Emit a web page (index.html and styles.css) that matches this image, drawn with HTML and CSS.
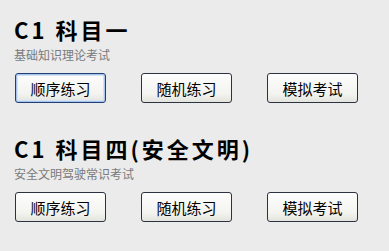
FILE: index.html
```html
<!DOCTYPE html>
<html lang="zh-CN">
<head>
<meta charset="utf-8">
<link rel="stylesheet" href="styles.css">
</head>
<body>
<div class="page">
  <section class="subject">
    <h1 class="title">C1 科目一</h1>
    <p class="desc">基础知识理论考试</p>
    <div class="buttons">
      <button class="btn btn-default">顺序练习</button>
      <button class="btn">随机练习</button>
      <button class="btn">模拟考试</button>
    </div>
  </section>
  <section class="subject">
    <h1 class="title">C1 科目四(安全文明)</h1>
    <p class="desc">安全文明驾驶常识考试</p>
    <div class="buttons">
      <button class="btn">顺序练习</button>
      <button class="btn">随机练习</button>
      <button class="btn">模拟考试</button>
    </div>
  </section>
</div>
</body>
</html>
```
FILE: styles.css
```css
html, body {
  margin: 0;
  padding: 0;
  background: #ebebeb;
}
.page {
  padding: 17px 0 0 14px;
  display: flex;
  flex-direction: column;
  gap: 33px;
  font-family: "Noto Sans CJK SC", sans-serif;
}
.subject {
  display: flex;
  flex-direction: column;
}
.title {
  margin: 0;
  font-size: 22px;
  line-height: 24px;
  font-weight: 700;
  letter-spacing: 3px;
  color: #000;
}
.desc {
  margin: 6px 0 0 0;
  font-size: 12px;
  line-height: 16px;
  color: #7a7a7a;
}
.buttons {
  margin-top: 10px;
  padding-left: 1px;
  display: flex;
  gap: 35px;
}
.btn {
  width: 91px;
  height: 30px;
  padding: 0;
  border: 1px solid #2b3340;
  border-radius: 3px;
  background: linear-gradient(#fdfdfd, #f3f3f0 70%, #e4e4de);
  font-family: "Noto Sans CJK SC", sans-serif;
  font-size: 15px;
  color: #000;
}
.btn-default {
  border-color: #1f3f76;
  box-shadow: inset 0 0 0 1px #a8c4ec, inset 0 0 0 2px #d4e2f6;
}
```
